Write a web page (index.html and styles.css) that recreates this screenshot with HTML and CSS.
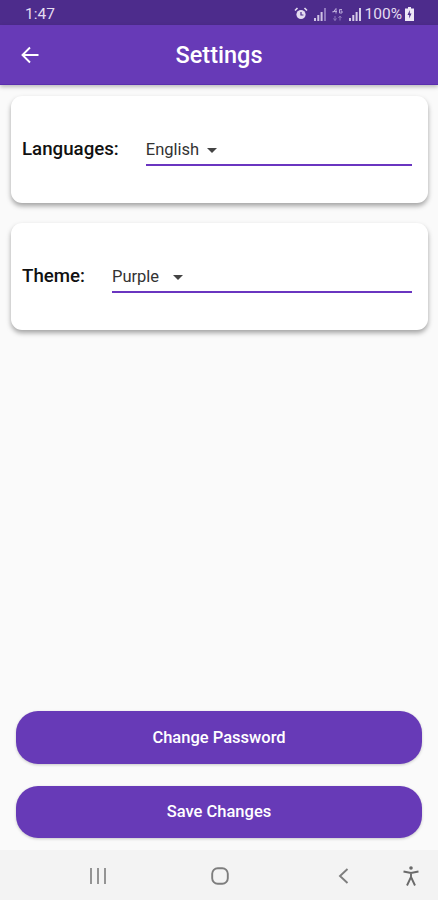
FILE: index.html
```html
<!DOCTYPE html>
<html lang="en">
<head>
  <meta charset="UTF-8" />
  <meta name="viewport" content="width=device-width, initial-scale=1.0"/>
  <title>Settings</title>
  <link rel="stylesheet" href="styles.css">
</head>

<body>
  <div class="status-bar">
    <span class="status-time">1:47</span>
    <div class="status-icons">
      <!-- alarm -->
      <svg width="14" height="14" viewBox="0 0 14 14">
        <circle cx="7" cy="7.5" r="4.6" fill="#e4dcf0"/>
        <path d="M1 3.5 3.5 1M13 3.5 10.5 1" stroke="#e4dcf0" stroke-width="1.6"/>
        <path d="M7 5v3h2.4" stroke="#4d2c8c" stroke-width="1.2" fill="none"/>
      </svg>
      <!-- signal -->
      <svg class="signal" width="12" height="13" viewBox="0 0 12 13">
        <path d="M0 10h2v3H0zM3.3 7h2v6h-2zM6.6 4h2v9h-2z" fill="#cfc3e4"/>
        <path d="M10 0h2v13h-2z" fill="#8f78bd"/>
      </svg>
      <!-- 4G data -->
      <svg class="data" width="11" height="13" viewBox="0 0 11 13">
        <path d="M1 4.5 4 .5v5M.5 3.5H5M10 1.500H7.500v3.500H10V3H8.500" stroke="#b9a9d8" stroke-width="1" fill="none"/>
        <path d="M3 8v4.500M1.500 10.500 3 12.500l1.500-2M8 12.500V8M6.500 10 8 8l1.500 2" stroke="#8f78bd" stroke-width="1" fill="none"/>
      </svg>
      <svg class="signal" width="12" height="13" viewBox="0 0 12 13">
        <path d="M0 10h2v3H0zM3.300 7h2v6h-2zM6.600 4h2v9h-2zM10 0h2v13h-2z" fill="#d6cce8"/>
      </svg>
      <span class="battery-text">100%</span>
      <!-- battery charging -->
      <svg class="battery" width="9" height="14" viewBox="0 0 9 14">
        <path d="M3 0h3v1.500h3V14H0V1.500h3z" fill="#eee8f6"/>
        <path d="M4.800 3 2.500 8h1.700v3.500L6.500 6.500H4.800z" fill="#4d2c8c"/>
      </svg>
    </div>
  </div>

  <header class="app-bar">
    <svg class="back-icon" width="20" height="20" viewBox="0 0 20 20">
      <path d="M18.500 10H2.500M10 2.500 2.500 10l7.500 7.500" stroke="#fff" stroke-width="1.900" fill="none"/>
    </svg>
    <h1>Settings</h1>
  </header>

  <main class="content">
    <section class="card">
      <label class="card-label">Languages:</label>
      <div class="dropdown">
        <span class="dropdown-value">English</span>
        <span class="dropdown-arrow"></span>
      </div>
    </section>

    <section class="card">
      <label class="card-label">Theme:</label>
      <div class="dropdown">
        <span class="dropdown-value dropdown-value-wide">Purple</span>
        <span class="dropdown-arrow"></span>
      </div>
    </section>

    <div class="actions">
      <button type="button">Change Password</button>
      <button type="button">Save Changes</button>
    </div>
  </main>

  <nav class="nav-bar">
    <svg class="nav-recent" width="18" height="16" viewBox="0 0 18 16">
      <path d="M2 0v16M9 0v16M16 0v16" stroke="#8a8a8a" stroke-width="1.800"/>
    </svg>
    <svg class="nav-home" width="18" height="18" viewBox="0 0 18 18">
      <rect x="1.200" y="1.200" width="15.600" height="15.600" rx="5.500" stroke="#7d7d7d" stroke-width="1.900" fill="none"/>
    </svg>
    <svg class="nav-back" width="11" height="16" viewBox="0 0 11 16">
      <path d="M9.500 1 2 8l7.500 7" stroke="#7d7d7d" stroke-width="1.900" fill="none"/>
    </svg>
    <svg class="nav-access" width="16" height="20" viewBox="0 0 16 20">
      <circle cx="8" cy="2" r="1.800" fill="#6a6a6a"/>
      <path d="M.5 5.500 8 7l7.500-1.500M8 7v4M8 11l-4 8.500M8 11l4 8.500" stroke="#6a6a6a" stroke-width="1.900" fill="none"/>
    </svg>
  </nav>
</body>
</html>
```

FILE: styles.css
```css
* {
  box-sizing: border-box;
}
body {
  margin: 0;
  height: 900px;
  display: flex;
  flex-direction: column;
  font-family: Roboto, 'Liberation Sans', sans-serif;
  background-color: #fafafa;
  color: #111;
  overflow: hidden;
}
.status-bar {
  height: 25px;
  flex: none;
  background-color: #4d2c8c;
  color: #e4dcf0;
  display: flex;
  align-items: center;
  justify-content: space-between;
  padding: 3px 24px 0 25px;
  font-size: 15.500px;
}
.status-icons {
  display: flex;
  align-items: center;
  gap: 6px;
}
.battery-text {
  margin-left: -2px;
  font-size: 15.500px;
}
.battery {
  margin-left: -3px;
}
.app-bar {
  height: 60px;
  flex: none;
  position: relative;
  z-index: 1;
  background-color: #673ab7;
  box-shadow: 0 2px 4px rgba(0,0,0,0.25);
  border-bottom: 1px solid #5a2fae;
  display: flex;
  align-items: center;
  justify-content: center;
}
.app-bar h1 {
  margin: 1px 0 0;
  color: white;
  font-size: 23.500px;
  font-weight: 500;
}
.back-icon {
  position: absolute;
  left: 20px;
  top: 20px;
}
.content {
  flex: 1;
  display: flex;
  flex-direction: column;
  padding: 11px 16px 12px 11px;
}
.card {
  height: 107px;
  flex: none;
  margin-right: -6px;
  margin-bottom: 20px;
  padding: 0 16px 0 11px;
  background: white;
  border-radius: 11px;
  box-shadow: 0 3px 5px rgba(0,0,0,0.35);
  display: flex;
  align-items: center;
}
.card-label {
  font-size: 18.700px;
  font-weight: 500;
  margin-right: 27px;
  margin-top: -2px;
}
.dropdown {
  flex: 1;
  height: 29px;
  margin-top: 4px;
  border-bottom: 2px solid #6a35c0;
  display: flex;
  align-items: flex-start;
  padding-top: 3px;
  font-size: 16.500px;
  color: #333;
}
.dropdown-arrow {
  width: 0;
  height: 0;
  margin: 8px 0 0 8px;
  border-left: 5px solid transparent;
  border-right: 5px solid transparent;
  border-top: 5px solid #444;
}
.dropdown-value-wide {
  margin-right: 6px;
}
.actions {
  margin-top: auto;
  padding-left: 5px;
  display: flex;
  flex-direction: column;
  gap: 22px;
}
.actions button {
  height: 52.500px;
  width: 406px;
  background-color: #673ab7;
  color: white;
  border: none;
  border-radius: 22px;
  box-shadow: 0 1px 3px rgba(0,0,0,0.2);
  font-family: inherit;
  font-size: 16.500px;
  font-weight: 500;
  cursor: pointer;
}
.nav-bar {
  height: 50px;
  flex: none;
  position: relative;
  background-color: #f3f3f3;
}
.nav-bar svg {
  position: absolute;
}
.nav-recent {
  left: 89px;
  top: 18px;
}
.nav-home {
  left: 211px;
  top: 17px;
}
.nav-back {
  left: 338px;
  top: 18px;
}
.nav-access {
  left: 403px;
  top: 16px;
}
```
